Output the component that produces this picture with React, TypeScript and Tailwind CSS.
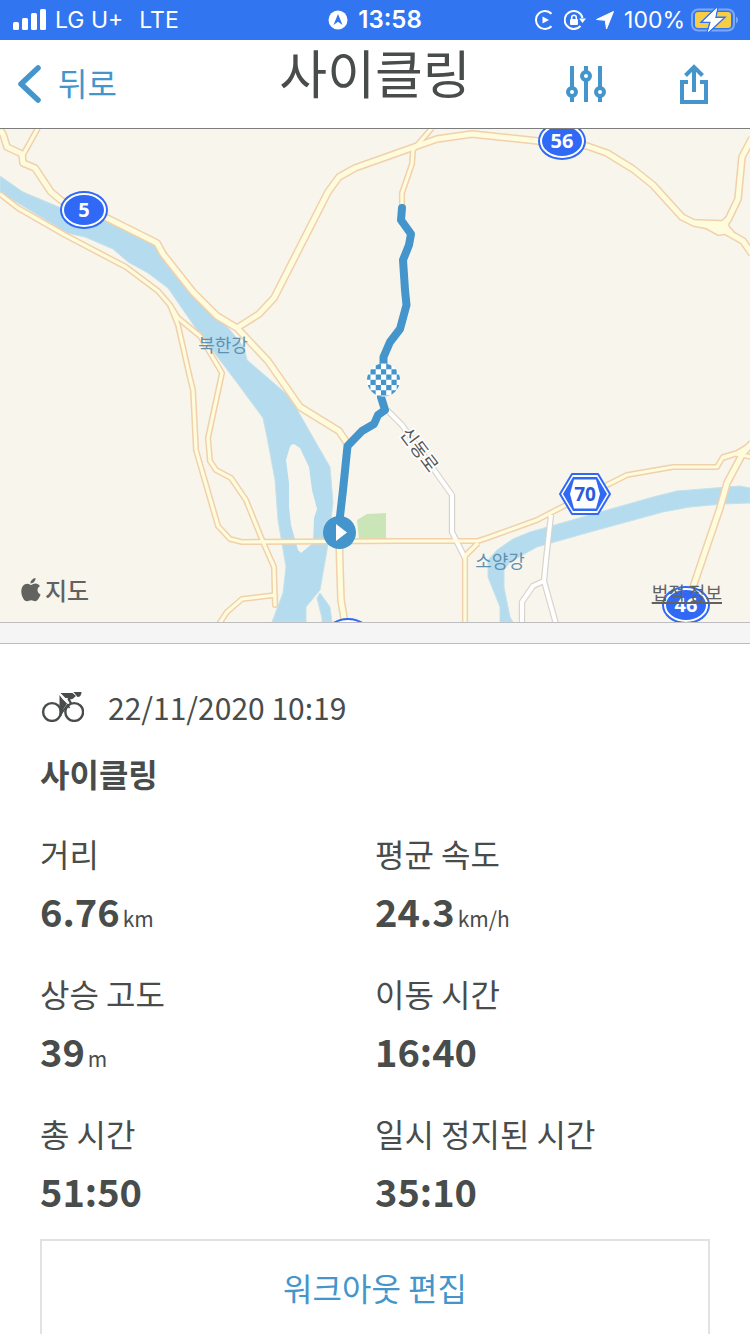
import type { ReactNode } from "react";

const RIVERS = [
  "M0 176 23 192 61 208 107 219 155 243 163 256 195 296 230 330 244 347 247 360 290 397 307 427 330 467 333 503 330 527 327 550 320 590 306 607 306 622H272L283 593 286 567 278 520 275 480 267 437 263 418 235 380 197 330 168 288 148 273 128 262 113 249 85 237 67 233 0 192Z",
  "M320 593 330 607 332 622H322L322 618 317 598Z",
  "M750 488 740 486 677 491 653 497 530 532 513 539 497 550 488 560 488 577 500 607 500 622H513L510 617 504 587 504 570 510 562 537 547 590 532 663 512 690 507 723 504 750 503Z",
];
const ISLAND =
  "M289 450Q290 444 294 444L300 448 309 467 312 490 317 509 314 518 313 543 301 553 298 550 291 525 289 507 289 483 286 460Z";

const MAIN_ROADS = [
  "M0 130 3 134 7 147 22 154 23 163 35 168 51 192 62 201 107 218 157 243 163 254 193 292 217 316 237 328 268 361 300 407 339 431 347 443",
  "M237 328 259 314 274 298 328 192 339 177 355 168 417 146 437 139 472 134 500 137 538 141 587 146 607 153 633 169 653 185 682 217 694 223 720 228 743 241 752 254",
  "M720 228 728 220 738 199 742 157 752 138",
  "M339 532 340 570 341 600 345 624",
  "M692 590 720 508 727 483 743 453 752 443",
];
const SMALL_ROADS = [
  "M38 128 23 155",
  "M0 194 18 208 65 235 126 267 158 291 170 305 178 318 200 336 222 373 208 438 210 461 216 470 231 478 246 500 263 542 274 567 275 605 275 595 242 599 227 612 219 624",
  "M170 305 178 325 190 378 193 390 196 450 218 526 230 539 242 542 400 541 478 541 490 537 537 520 562 507 607 485 627 475 673 467 717 467 723 457 737 453 752 444",
  "M432 128 413 150 412 164 402 193 402 210",
  "M465 624V556L478 543",
  "M723 458 735 454 752 457",
];
const MINOR_ROADS = [
  "M387 410 402 425 452 495 452 532 465 558",
  "M551 515 546 560 544 581 533 586 522 602 522 624",
  "M544 581 556 624",
];

function Lines({ paths, stroke, width }: { paths: string[]; stroke: string; width: number }) {
  return (
    <g fill="none" stroke={stroke} strokeWidth={width} strokeLinejoin="round">
      {paths.map((d) => (
        <path key={d} d={d} />
      ))}
    </g>
  );
}

function Shield({ x, y, label }: { x: number; y: number; label?: string }) {
  return (
    <g>
      <ellipse cx={x} cy={y} rx="24" ry="19" fill="#2f69f6" />
      <ellipse cx={x} cy={y} rx="21" ry="16" fill="#2f69f6" stroke="#fff" strokeWidth="2" />
      {label && (
        <text x={x} y={y + 7} textAnchor="middle" fill="#fff" className="font-['Noto_Sans',sans-serif] text-[20px] font-bold">
          {label}
        </text>
      )}
    </g>
  );
}

function RouteMap() {
  const cells: ReactNode[] = [];
  const size = 5.25;
  for (let r = 0; r < 7; r++) {
    for (let c = 0; c < 7; c++) {
      if ((r + c) % 2 === 0) {
        cells.push(<rect key={`${r}-${c}`} x={365.2 + c * size} y={364 + r * size} width={size} height={size} />);
      }
    }
  }
  return (
    <svg viewBox="0 129 750 493" className="block w-full bg-[#f8f5ed]" role="img" aria-label="지도">
      <defs>
        <clipPath id="finish">
          <circle cx="383.5" cy="380" r="16.5" />
        </clipPath>
      </defs>
      <path d="M357 520 367 514 386 513V540H359Z" fill="#cae5b8" />
      <g fill="#b5dcee" stroke="#c6e1ea" strokeWidth="1">
        {RIVERS.map((d) => (
          <path key={d} d={d} />
        ))}
      </g>
      <path d={ISLAND} fill="#f8f5ed" />
      <Lines paths={MINOR_ROADS} stroke="#d8d4cc" width={6.4} />
      <Lines paths={SMALL_ROADS} stroke="#f1d0ac" width={6.2} />
      <Lines paths={MAIN_ROADS} stroke="#f1d0ac" width={8} />
      <path d="M690 219.5 722 220.5 729 214 729 226 735 233 718 235.5Z" fill="#fefcdc" stroke="#f1d0ac" strokeWidth="1.5" />
      <Lines paths={MINOR_ROADS} stroke="#ffffff" width={4} />
      <Lines paths={SMALL_ROADS} stroke="#fefcdc" width={3.2} />
      <Lines paths={MAIN_ROADS} stroke="#fefcdc" width={5} />

      <g className="font-['Noto_Sans_CJK_KR',sans-serif] text-[18px]">
        <text x="223" y="352" textAnchor="middle" fill="#5f92b0">북한강</text>
        <text x="500" y="568" textAnchor="middle" fill="#5f92b0">소양강</text>
        <text
          transform="translate(419 450) rotate(53)"
          y="6"
          textAnchor="middle"
          fill="#555552"
          stroke="#fff"
          strokeWidth="3"
          paintOrder="stroke"
        >
          신동로
        </text>
      </g>

      <g fill="none" stroke="#4395cb" strokeWidth="8" strokeLinecap="round" strokeLinejoin="round">
        <path d="M402 208 401 220 411 234 409 245 403 260 405 290 406.5 305 400 329 390 342 383.5 357V372" />
        <path d="M381 397 385 410 378 415 374 424 362 431 347.5 446 343 490 339 525" />
      </g>
      <circle cx="383.5" cy="380" r="16.5" fill="#fff" />
      <g clipPath="url(#finish)" fill="#4395cb">{cells}</g>
      <circle cx="339.5" cy="532.5" r="16.5" fill="#4395cb" />
      <path d="M336 524 347 532.5 336 541Z" fill="#fff" />

      <Shield x={84} y={210} label="5" />
      <Shield x={562} y={141} label="56" />
      <Shield x={686} y={605} label="46" />
      <Shield x={348} y={637} />
      <path d="M572 474H598L610 494 598 514H572L560 494Z" fill="#fff" stroke="#2f69f6" strokeWidth="2" strokeLinejoin="round" />
      <path d="M573 477H597L607 494 597 511H573L563 494Z" fill="#2f69f6" />
      <path d="M574 479.5H596L600 494 596 508.5H574L570 494Z" fill="#fff" />
      <text x="585" y="501" textAnchor="middle" fill="#2b5bd9" className="font-['Noto_Sans',sans-serif] text-[19px] font-bold">70</text>
    </svg>
  );
}

function StatusBar() {
  return (
    <div className="grid h-10 shrink-0 grid-cols-[1fr_auto_1fr] items-center bg-[#3275f0] px-3 font-['Inter',sans-serif] text-[23px] text-white">
      <div className="flex items-center gap-2">
        <svg width="35" height="22" viewBox="0 0 35 22" fill="#fff" aria-hidden="true">
          <rect x="1" y="13" width="6" height="8" rx="1.5" />
          <rect x="10" y="9" width="6" height="12" rx="1.5" />
          <rect x="19" y="4" width="6" height="17" rx="1.5" />
          <rect x="28" y="0" width="6" height="21" rx="1.5" />
        </svg>
        <span>LG U+</span>
        <span className="ml-2">LTE</span>
      </div>
      <div className="flex items-center gap-[10px]">
        <svg width="20" height="20" viewBox="0 0 20 20" aria-hidden="true">
          <circle cx="10" cy="10" r="9.5" fill="#fff" />
          <path d="M10 4 14.5 15 10 11.8 5.5 15Z" fill="#3275f0" />
        </svg>
        <span className="text-[24px] font-semibold">13:58</span>
      </div>
      <div className="flex items-center justify-end gap-[9px]">
        <svg width="20" height="20" viewBox="0 0 20 20" fill="none" aria-hidden="true">
          <path d="M16.5 3.8A9 9 0 1 0 16.5 16.2" stroke="#fff" strokeWidth="2" />
          <path d="M7.5 6.5V13.5L14 10Z" fill="#fff" />
        </svg>
        <svg width="22" height="20" viewBox="0 0 22 20" fill="none" aria-hidden="true">
          <path d="M16.5 16A9 9 0 1 1 18.5 8" stroke="#fff" strokeWidth="2" />
          <path d="M15 8.5H22L18.5 13Z" fill="#fff" />
          <rect x="6" y="9" width="8" height="6" rx="1" fill="#fff" />
          <path d="M7.7 9.5V7.5a2.3 2.3 0 0 1 4.6 0V9.5" stroke="#fff" strokeWidth="1.5" />
        </svg>
        <svg width="20" height="20" viewBox="0 0 20 20" fill="#fff" stroke="#fff" strokeLinejoin="round" aria-hidden="true">
          <path d="M18.5 1.5 1.5 9.5 10.3 10.3 11.5 19Z" />
        </svg>
        <span>100%</span>
        <svg width="48" height="26" viewBox="0 0 48 26" className="-ml-1" aria-hidden="true">
          <rect x="2" y="2.5" width="42" height="21" rx="6" fill="none" stroke="#7ea9f6" strokeWidth="2" />
          <path d="M46 9.5a4 4 0 0 1 0 7Z" fill="#7ea9f6" />
          <rect x="5" y="5" width="36" height="16" rx="3" fill="#f8cd46" />
          <path d="M27 1 13 14.5H21L18 25 33 11H25Z" fill="#fff" stroke="#3275f0" strokeWidth="3" paintOrder="stroke" />
          <path d="M27 1 13 14.5H21L18 25 33 11H25Z" fill="#fff" />
        </svg>
      </div>
    </div>
  );
}

function Header() {
  return (
    <header className="grid h-[89px] shrink-0 grid-cols-[1fr_auto_1fr] items-center border-b border-[#7d7d7d] bg-white px-4">
      <button type="button" className="flex items-center gap-4 justify-self-start text-[32px] leading-10 text-[#4395cb]">
        <svg width="26" height="40" viewBox="0 0 26 40" fill="none" stroke="#4395cb" strokeWidth="5.5" strokeLinecap="round" strokeLinejoin="round" aria-hidden="true">
          <path d="M22 4 5 20 22 36" />
        </svg>
        <span className="pb-1">뒤로</span>
      </button>
      <h1 className="pb-6 text-[52px] leading-[64px]">사이클링</h1>
      <div className="flex items-center gap-[74px] justify-self-end pr-[26px]">
        <button type="button" aria-label="설정">
          <svg width="40" height="36" viewBox="0 0 40 36" fill="none" stroke="#4395cb" strokeWidth="4" aria-hidden="true">
            <path d="M6 0V22M6 30V36M20 0V6M20 14V36M34 0V22M34 30V36" />
            <circle cx="6" cy="26" r="4" />
            <circle cx="20" cy="10" r="4" />
            <circle cx="34" cy="26" r="4" />
          </svg>
        </button>
        <button type="button" aria-label="공유">
          <svg width="28" height="40" viewBox="0 0 28 40" fill="none" stroke="#4395cb" strokeWidth="4" aria-hidden="true">
            <path d="M8 18H2V38H26V18H20M14 28V3M5.5 11.5 14 3 22.5 11.5" />
          </svg>
        </button>
      </div>
    </header>
  );
}

function CyclingIcon() {
  return (
    <svg width="44" height="32" viewBox="0 0 44 32" fill="none" stroke="#484c4b" strokeWidth="2.4" aria-hidden="true">
      <circle cx="12" cy="22" r="8.9" />
      <circle cx="34.2" cy="22" r="8.9" />
      <path d="M21 24 27.5 15 29.5 18" strokeWidth="1.6" />
      <g fill="#484c4b" stroke="none">
        <path d="M19.5 5 22 8.5 27 13.5 23.5 19 21.5 26 19.5 26Z" />
        <path d="M20.500 3H32.500L36 6 32.500 9 30 9.500 32.500 13.500 30.500 14.500 27.500 9.500 28 8 25.500 8Z" />
        <path d="M33.500 2H41.500C41.500 5 40 7 37.500 7Z" />
      </g>
    </svg>
  );
}

const STATS = [
  { label: "거리", value: "6.76", unit: "km" },
  { label: "평균 속도", value: "24.3", unit: "km/h" },
  { label: "상승 고도", value: "39", unit: "m" },
  { label: "이동 시간", value: "16:40" },
  { label: "총 시간", value: "51:50" },
  { label: "일시 정지된 시간", value: "35:10" },
];

export default function App() {
  return (
    <div className="flex h-screen flex-col bg-white font-['Noto_Sans_CJK_KR',sans-serif] text-[#484c4b]">
      <StatusBar />
      <Header />
      <div className="min-h-0 flex-1 overflow-y-auto [scrollbar-width:none]">
        <div className="relative">
          <RouteMap />
          <div className="absolute bottom-4 left-5 flex items-center gap-1 text-[24px] font-medium leading-8 text-[#62625f]">
            <svg width="21" height="26" viewBox="0 0 21 26" fill="#62625f" aria-hidden="true">
              <path d="M15.5 1C15.8 3.5 13.5 6.5 10.5 6.5 10.2 4 12.8 1.2 15.5 1ZM10.8 8C12 8 13.3 6.6 15.5 6.6 17.3 6.6 18.9 7.6 19.9 9 16.4 11 16.9 16 20.6 17.5 19.7 20 17.6 24.3 15.3 24.3 13.7 24.3 13.2 23.3 11.2 23.3 9.2 23.3 8.6 24.3 7 24.3 4 24.3 1.3 19 1.3 14.5 1.3 9.5 4.3 6.8 7.3 6.8 9 6.8 10 8 10.8 8Z" />
            </svg>
            지도
          </div>
          <a href="#legal" className="absolute bottom-4 right-7 text-[18px] leading-7 text-[#62625f] underline decoration-2 underline-offset-2">
            법적 정보
          </a>
        </div>
        <div className="h-[22px] border-y border-[#bdbdc0] bg-[#f5f5f5]" />
        <main className="px-10 pt-[37px]">
          <div className="flex items-center gap-6">
            <CyclingIcon />
            <p className="pt-0.5 text-[30px] leading-12">22/11/2020 10:19</p>
          </div>
          <h2 className="mt-[18px] text-[32px] font-bold leading-12">사이클링</h2>
          <dl className="mt-8 grid grid-cols-2 gap-y-[34px]">
            {STATS.map((s) => (
              <div key={s.label}>
                <dt className="text-[32px] leading-12">{s.label}</dt>
                <dd className="mt-[10px] flex items-baseline gap-[3px]">
                  <span className="text-[38px] font-bold leading-12">{s.value}</span>
                  {s.unit && <span className="text-[21px] leading-none">{s.unit}</span>}
                </dd>
              </div>
            ))}
          </dl>
          <button type="button" className="mt-6 h-[100px] w-full border-2 border-[#e2e2e2] pb-1 text-[32px] text-[#4395cb]">
            워크아웃 편집
          </button>
        </main>
      </div>
    </div>
  );
}
